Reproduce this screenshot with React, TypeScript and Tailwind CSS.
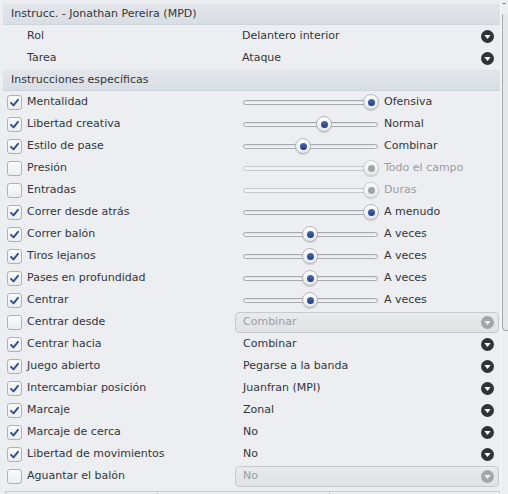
import React from "react";

type SliderRow = {
  label: string;
  checked: boolean;
  pos: number;
  value: string;
  disabled?: boolean;
};

type ComboRow = {
  label: string;
  checked: boolean;
  value: string;
  disabled?: boolean;
};

const sliders: SliderRow[] = [
  { label: "Mentalidad", checked: true, pos: 128, value: "Ofensiva" },
  { label: "Libertad creativa", checked: true, pos: 81, value: "Normal" },
  { label: "Estilo de pase", checked: true, pos: 60, value: "Combinar" },
  { label: "Presión", checked: false, pos: 128, value: "Todo el campo", disabled: true },
  { label: "Entradas", checked: false, pos: 128, value: "Duras", disabled: true },
  { label: "Correr desde atrás", checked: true, pos: 128, value: "A menudo" },
  { label: "Correr balón", checked: true, pos: 67, value: "A veces" },
  { label: "Tiros lejanos", checked: true, pos: 67, value: "A veces" },
  { label: "Pases en profundidad", checked: true, pos: 67, value: "A veces" },
  { label: "Centrar", checked: true, pos: 67, value: "A veces" },
];

const combos: ComboRow[] = [
  { label: "Centrar desde", checked: false, value: "Combinar", disabled: true },
  { label: "Centrar hacia", checked: true, value: "Combinar" },
  { label: "Juego abierto", checked: true, value: "Pegarse a la banda" },
  { label: "Intercambiar posición", checked: true, value: "Juanfran (MPI)" },
  { label: "Marcaje", checked: true, value: "Zonal" },
  { label: "Marcaje de cerca", checked: true, value: "No" },
  { label: "Libertad de movimientos", checked: true, value: "No" },
  { label: "Aguantar el balón", checked: false, value: "No", disabled: true },
];

function Arrow({ disabled }: { disabled?: boolean }) {
  return (
    <svg width="13" height="13" viewBox="0 0 13 13" className="shrink-0">
      <circle cx="6.5" cy="6.5" r="6.5" fill={disabled ? "#a3a5a8" : "#2f3338"} />
      <polygon points="3.3,5 9.7,5 6.5,9" fill={disabled ? "#eceef0" : "#ffffff"} />
    </svg>
  );
}

function Check({ checked }: { checked: boolean }) {
  return (
    <div className="w-[15px] h-[15px] shrink-0 rounded-[3px] border border-[#aeb2b8] bg-gradient-to-b from-[#fbfbfc] to-[#eceef0] flex items-center justify-center">
      {checked && (
        <svg width="11" height="11" viewBox="0 0 11 11">
          <polyline
            points="2,5.8 4.5,8.3 9,2.8"
            fill="none"
            stroke="#2c4d92"
            strokeWidth="1.9"
            strokeLinecap="round"
            strokeLinejoin="round"
          />
        </svg>
      )}
    </div>
  );
}

function Slider({ pos, disabled }: { pos: number; disabled?: boolean }) {
  return (
    <div className="relative w-[135px] h-[16px] shrink-0">
      <div
        className={`absolute left-0 right-0 top-[6px] h-[5px] rounded-full border ${
          disabled ? "border-[#c4c7cb] bg-[#f1f2f3]" : "border-[#a6aab0] bg-gradient-to-b from-[#dfe1e4] to-[#f7f8f9]"
        }`}
      />
      <div
        className={`absolute top-0 w-[16px] h-[16px] rounded-full border flex items-center justify-center shadow-[0_1px_1px_rgba(0,0,0,0.15)] ${
          disabled ? "border-[#c9ccd0] bg-gradient-to-b from-[#fbfbfb] to-[#e9eaec]" : "border-[#b3b7bd] bg-gradient-to-b from-[#ffffff] to-[#e6e8eb]"
        }`}
        style={{ left: pos - 8 }}
      >
        <div
          className={`w-[7px] h-[7px] rounded-full ${
            disabled ? "bg-[#a2a3a5]" : "bg-gradient-to-b from-[#4a6bb0] to-[#1f3d82]"
          }`}
        />
      </div>
    </div>
  );
}

function Header({ text }: { text: string }) {
  return (
    <div className="h-[22px] shrink-0 flex items-center pl-[8px] bg-gradient-to-b from-[#e2e6eb] to-[#d9dee5] border-t border-[#e9ecf0] border-b border-b-[#cfd5dc] text-[#31363b]">
      {text}
    </div>
  );
}

export default function App() {
  return (
    <div className="w-[508px] h-[494px] overflow-hidden bg-[#eceef1] flex items-start font-['DejaVu_Sans',sans-serif] text-[11px] text-[#31363b]">
      <div className="w-[500px] shrink-0 pl-[3px] pt-[3px] flex flex-col">
        <Header text="Instrucc. - Jonathan Pereira (MPD)" />
        {[
          ["Rol", "Delantero interior"],
          ["Tarea", "Ataque"],
        ].map(([l, v]) => (
          <div key={l} className="h-[22px] shrink-0 flex items-center">
            <div className="w-[232px] shrink-0 pl-[24px]">{l}</div>
            <div className="flex-1 flex items-center justify-between pl-[7px] pr-[6px]">
              <span>{v}</span>
              <Arrow />
            </div>
          </div>
        ))}
        <Header text="Instrucciones específicas" />
        {sliders.map((r) => (
          <div key={r.label} className="h-[22px] shrink-0 flex items-center">
            <div className="w-[232px] shrink-0 pl-[4px] flex items-center gap-[5px]">
              <Check checked={r.checked} />
              <span>{r.label}</span>
            </div>
            <div className="flex-1 flex items-center pl-[8px]">
              <Slider pos={r.pos} disabled={r.disabled} />
              <span className={`ml-[6px] ${r.disabled ? "text-[#9b9d9f]" : ""}`}>{r.value}</span>
            </div>
          </div>
        ))}
        {combos.map((r) => (
          <div key={r.label} className="h-[22px] shrink-0 flex items-center">
            <div className="w-[232px] shrink-0 pl-[4px] flex items-center gap-[5px]">
              <Check checked={r.checked} />
              <span>{r.label}</span>
            </div>
            {r.disabled ? (
              <div className="w-[264px] h-[21px] flex items-center justify-between pl-[7px] pr-[4px] rounded-[4px] border border-[#c6cace] bg-gradient-to-b from-[#e8eaec] to-[#e0e2e5] text-[#9b9d9f]">
                <span>{r.value}</span>
                <Arrow disabled />
              </div>
            ) : (
              <div className="flex-1 flex items-center justify-between pl-[8px] pr-[6px]">
                <span>{r.value}</span>
                <Arrow />
              </div>
            )}
          </div>
        ))}
        <div className="mt-[4px] ml-[2px] w-[495px] h-[10px] shrink-0 flex border-t border-[#c9ced5]">
          <div className="w-[152px] border-l border-[#c9ced5]" />
          <div className="w-[172px] border-l border-[#c9ced5]" />
          <div className="flex-1 border-l border-r border-[#c9ced5]" />
        </div>
      </div>
      <div className="w-[8px] h-[494px] shrink-0 flex">
        <div className="w-[2px] bg-[#f2f3f5]" />
        <div className="flex-1 flex flex-col">
          <div className="mt-[3px] w-[4px] h-[1px] bg-[#8e9399]" />
          <div className="mt-[10px] h-[317px] border-l border-b border-[#a4a9af] rounded-bl-[4px] bg-[#e6e9ec]" />
        </div>
      </div>
    </div>
  );
}
